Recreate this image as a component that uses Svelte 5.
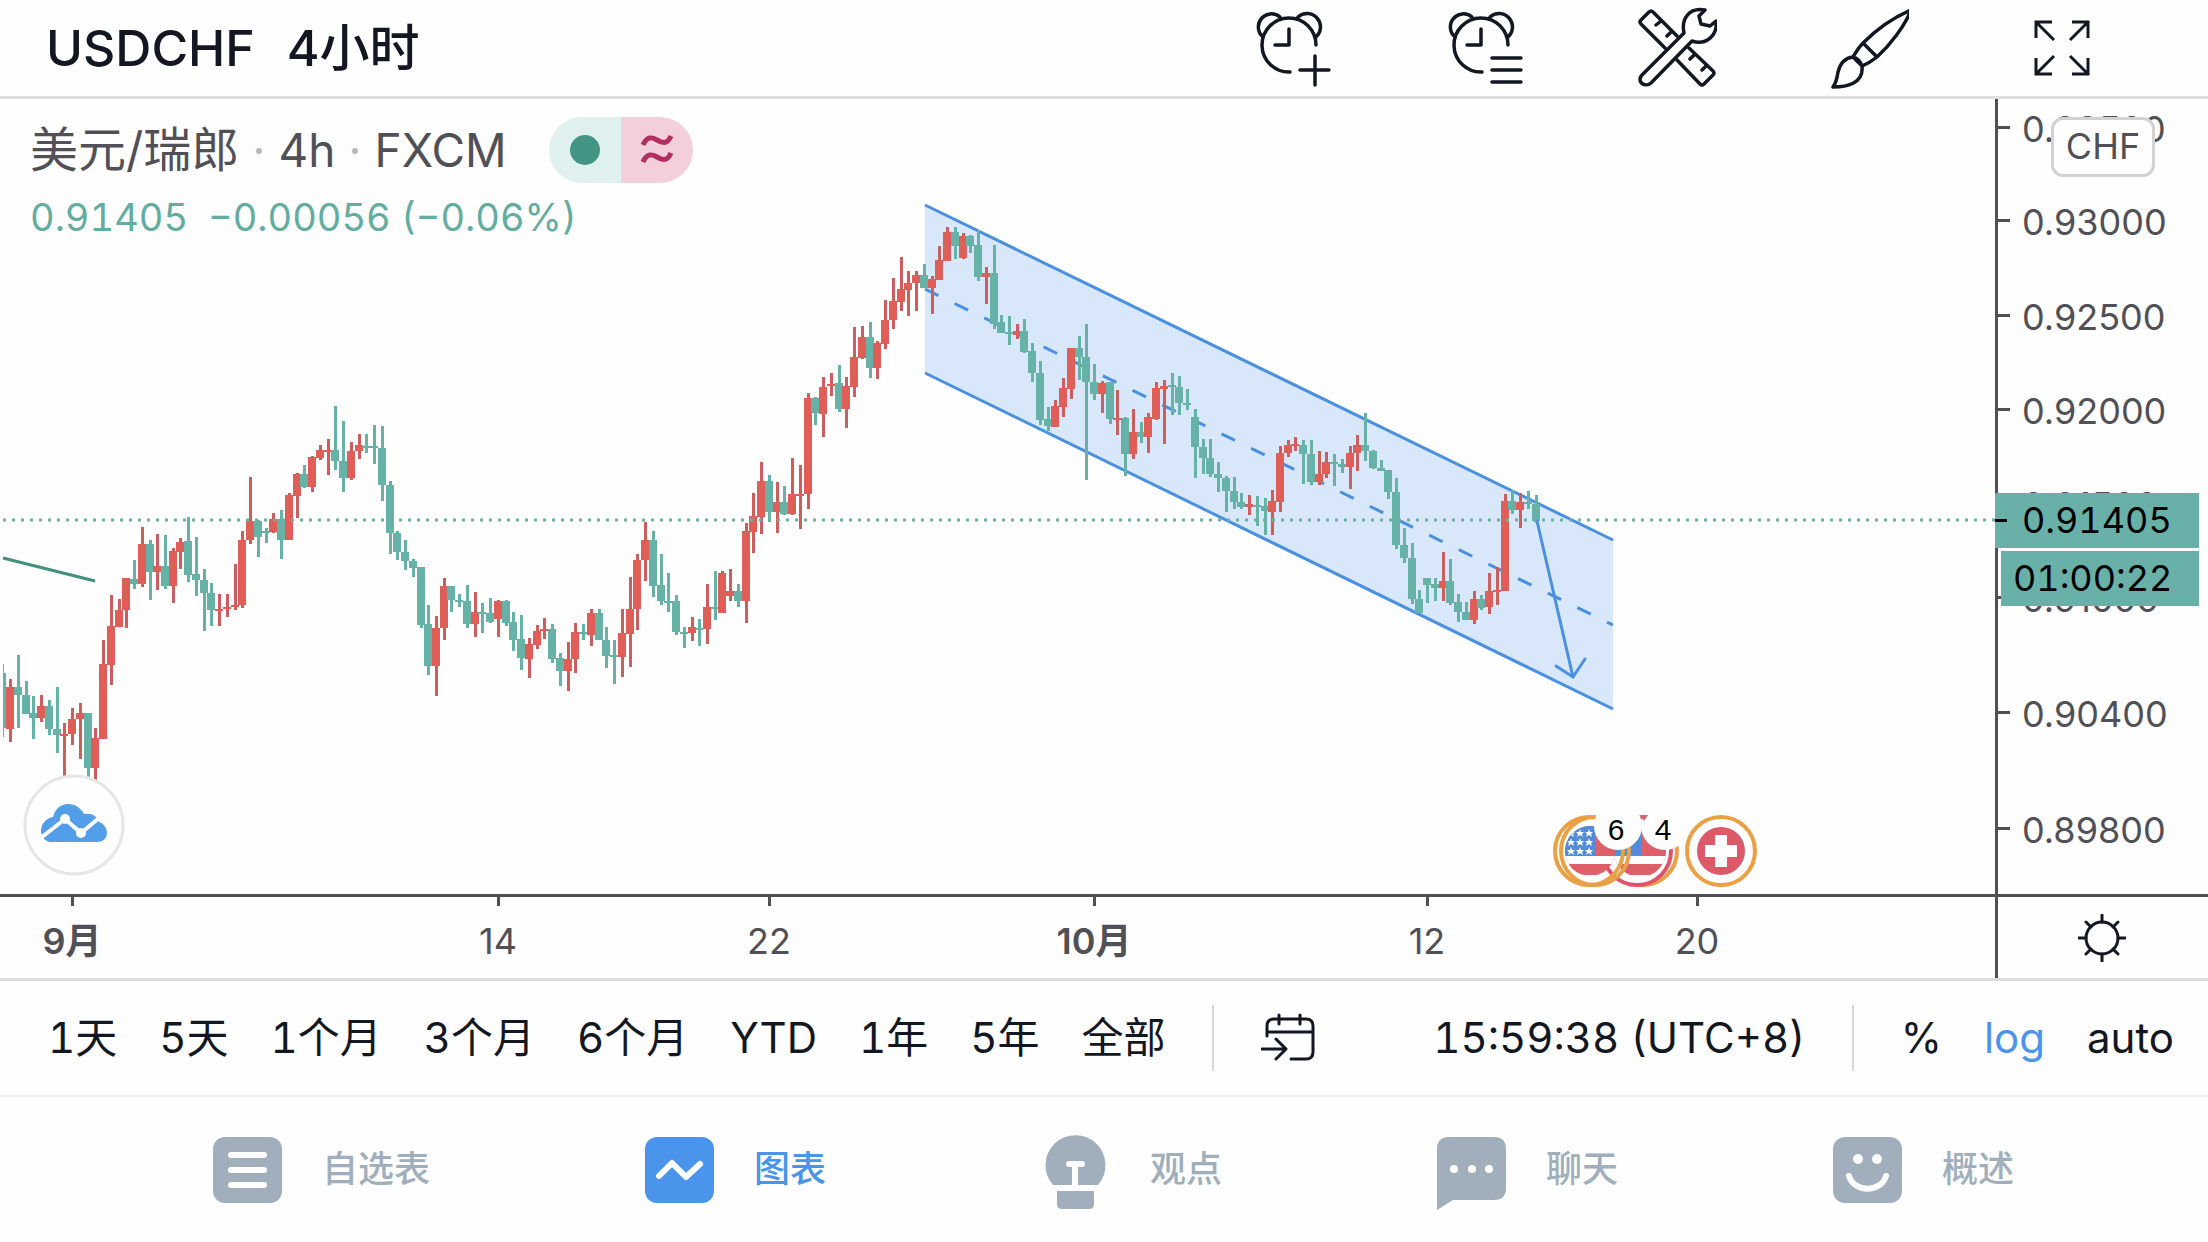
<script>
  // color, máximo, cuerpo arriba, cuerpo abajo, mínimo
  const datos = `
g 664 673 728 737|r 679 687 729 742|g 655 687 695 728|g 681 695 714 714|g 696 713 718 739|r 695 706 718 722
g 700 706 729 735|g 687 729 735 753|r 723 734 735 778|r 708 719 734 745|r 703 713 719 759|g 713 713 768 779
r 728 738 768 783|r 640 664 739 739|r 595 626 665 685|r 599 610 627 627|r 578 578 610 628|g 560 579 584 589
r 527 544 584 587|g 540 544 572 600|r 534 566 572 590|g 535 566 586 589|r 548 551 586 603|r 538 542 552 569
g 517 541 575 582|g 537 574 580 596|g 569 580 593 631|g 583 593 610 626|r 594 609 611 626|r 594 607 609 617
r 564 605 607 610|r 531 540 605 608|r 477 521 540 544|g 520 521 537 557|g 528 531 532 543|r 513 519 532 533
g 510 519 540 559|r 493 495 540 540|r 473 474 496 518|g 465 474 487 488|r 456 457 487 492|r 445 450 458 460
r 439 450 451 475|g 406 450 461 470|g 421 461 478 492|r 442 451 478 480|r 434 445 451 459|g 434 446 447 453
g 425 446 448 464|g 426 448 485 501|g 481 485 533 554|g 531 533 552 560|g 540 552 561 570|g 559 561 568 577
g 567 567 625 628|g 605 624 666 675|r 616 628 666 696|r 578 586 628 640|g 586 586 600 612|g 594 600 601 607
g 585 601 624 628|r 592 612 624 637|g 603 612 613 633|g 598 613 622 623|r 600 601 619 637|g 600 601 623 626
g 612 622 640 651|g 615 639 658 670|r 638 644 659 678|r 625 631 645 649|r 618 629 631 639|g 624 629 659 663
g 653 658 671 686|r 642 659 671 691|r 623 632 659 673|g 624 632 634 640|r 609 613 635 646|g 609 613 640 640
g 627 640 656 668|g 640 655 656 684|r 609 633 657 677|r 577 609 634 667|r 554 560 609 630|r 522 540 560 581
g 531 540 586 597|g 554 585 601 605|g 573 601 602 612|g 595 601 632 635|g 627 632 633 648|r 617 627 633 641
g 619 628 629 646|r 584 607 629 644|g 571 607 609 620|r 571 573 613 613|r 569 591 596 601|g 584 591 601 607
r 523 531 601 623|r 493 516 532 553|r 462 481 517 534|g 475 481 512 522|r 482 502 512 533|g 486 502 514 515
r 458 494 514 515|r 465 494 495 529|r 393 398 494 509|g 397 398 413 425|r 377 387 414 437|r 373 384 386 396
g 365 383 409 412|r 377 386 409 428|r 327 357 387 397|r 326 337 358 359|g 322 337 368 378|r 341 343 368 379
r 300 320 344 349|r 278 301 320 329|r 257 289 302 311|r 271 283 290 316|r 271 275 283 311|g 264 275 288 288
r 276 279 288 314|r 246 260 280 280|r 227 232 261 261|g 227 232 246 259|r 233 236 258 259|g 235 236 246 253
g 230 245 277 281|r 267 273 277 304|g 245 273 324 329|g 315 322 333 333|g 316 332 333 345|r 324 331 335 339
g 319 331 352 353|g 343 351 373 382|g 361 373 420 425|g 407 419 426 431|r 400 406 427 427|r 378 388 407 417
r 348 348 389 399|g 336 348 357 380|g 324 357 382 480|g 364 382 394 400|r 381 383 394 413|g 382 382 419 424
r 390 418 419 435|g 417 418 454 476|r 409 432 454 459|g 422 432 437 443|r 413 417 437 453|r 382 388 419 420
r 380 386 389 444|g 373 385 387 415|g 376 387 403 415|g 389 403 404 410|g 409 417 447 478|g 439 447 458 474
g 439 458 474 477|g 462 474 478 492|g 476 478 491 512|g 477 491 502 509|g 493 502 507 509|r 495 504 507 515
g 496 505 506 526|g 498 506 511 535|r 490 501 512 535|r 446 453 502 512|r 440 445 453 457|r 437 444 446 451
g 440 445 454 484|g 440 454 482 485|r 451 474 482 485|r 452 462 474 478|g 454 462 464 486|g 459 464 467 473
r 446 453 467 489|r 435 445 453 471|g 413 445 451 461|g 450 451 468 469|g 460 468 471 471|g 470 470 492 499
g 478 492 545 549|g 528 545 558 563|g 543 558 599 604|g 590 599 613 613|g 578 578 585 603|g 578 584 588 601
r 552 581 588 601|g 559 581 603 605|g 594 602 612 622|g 602 612 620 620|r 591 599 620 624|g 595 599 608 610
r 573 591 607 614|r 567 590 592 605|r 494 501 591 591|g 490 501 510 514|r 493 502 510 528|g 491 502 504 509
g 495 504 521 523`;

  const velas = datos.trim().split(/[|\n]/).map((fila, i) => {
    const [color, max, arriba, abajo, min] = fila.split(' ');
    return {
      x: Math.round(2.4 + i * 7.743),
      sube: color === 'r',
      max: +max,
      arriba: +arriba,
      abajo: +abajo,
      min: +min
    };
  });

  const precios = [
    { y: 127, texto: '0.93500' },
    { y: 220, texto: '0.93000' },
    { y: 315, texto: '0.92500' },
    { y: 409, texto: '0.92000' },
    { y: 503, texto: '0.91500' },
    { y: 597, texto: '0.91000' },
    { y: 712, texto: '0.90400' },
    { y: 828, texto: '0.89800' }
  ];

  const fechas = [
    { x: 72, texto: '9月', mes: true },
    { x: 498, texto: '14' },
    { x: 769, texto: '22' },
    { x: 1094, texto: '10月', mes: true },
    { x: 1427, texto: '12' },
    { x: 1697, texto: '20' }
  ];

  const rangos = ['1天', '5天', '1个月', '3个月', '6个月', 'YTD', '1年', '5年', '全部'];

  const estrellas = [
    [1571, 833], [1580, 833], [1589, 833],
    [1571, 842], [1580, 842], [1589, 842],
    [1571, 851], [1580, 851], [1589, 851]
  ];

  let activa = 'grafico';
  let escalaLog = true;
</script>

<header class="top-bar">
  <button class="symbol">USDCHF</button>
  <button class="symbol">4小时</button>
  <div class="tools">
    <button aria-label="添加警报">
      <svg width="80" height="88" viewBox="0 0 80 88">
        <path d="M63 41A27 27 0 1 0 37 68M10 33A13 13 0 1 1 27 13M45 13A13 13 0 1 1 63 33M36 25V41H22M62 52V81M47 66H76" />
      </svg>
    </button>
    <button aria-label="警报列表">
      <svg width="80" height="88" viewBox="0 0 80 88">
        <path d="M63 41A27 27 0 1 0 37 68M10 33A13 13 0 1 1 27 13M45 13A13 13 0 1 1 63 33M36 25V41H22M47 54H76M47 66H76M47 78H76" />
      </svg>
    </button>
    <button aria-label="工具">
      <svg width="80" height="88" viewBox="-1 0 80 88">
        <path d="M27 44L3 20Q1 18 3 16L11 8Q13 6 15 8L39 32M51 44L75 67Q77 69 75 71L66 80Q64 82 62 80L39 56M23 17L18 21M34 27L29 32M57 50L52 55M69 61L64 66" />
        <path d="M4 71L46 29C43 15 51 3 67 6L61 12L63 20L72 22L78 17C80 31 68 42 54 37L13 79C7 84 -2 78 4 71Z" />
      </svg>
    </button>
    <button aria-label="绘图">
      <svg width="80" height="88" viewBox="-3 0 80 88">
        <path d="M79 6C60 14 43 27 31 39C26 44 24 48 21 53L30 62C35 60 40 57 45 53C58 41 73 22 79 6ZM31 39L45 53M21 53C12 54 8 60 6 68C5 75 4 79 1 83C14 83 32 80 30 62C28 57 25 54 21 53Z" />
      </svg>
    </button>
    <button aria-label="全屏">
      <svg width="80" height="88" viewBox="0 0 80 88">
        <path class="square" d="M33 36L15 18M15 34V18H31M49 36L67 18M51 18H67V34M33 52L15 70M15 54V70H31M49 52L67 70M51 70H67V54" />
      </svg>
    </button>
  </div>
</header>

<main class="chart">
  <svg class="plot" viewBox="0 99 2208 879" role="img" aria-label="USDCHF">
    <polygon points="925,205 1613,540 1613,709 925,373" fill="#d8e7f9" />
    <g class="channel">
      <line x1="925" y1="205" x2="1613" y2="540" />
      <line x1="925" y1="373" x2="1613" y2="709" />
      <line x1="925" y1="289" x2="1613" y2="625" stroke-dasharray="15 18" />
    </g>
    <line x1="3" y1="558" x2="95" y2="581" stroke="#43907f" stroke-width="3" />

    {#each velas as vela}
      <rect class="wick" class:up={vela.sube} x={vela.x - 1} y={vela.max} width="3" height={vela.min - vela.max} />
      <rect class="body" class:up={vela.sube} x={vela.x - 4} y={vela.arriba} width="8" height={Math.max(2, vela.abajo - vela.arriba)} />
    {/each}
    <rect x="0" y="600" width="3" height="200" fill="#fefefe" />

    <line x1="3" y1="520" x2="1995" y2="520" stroke="#6fb0a3" stroke-width="3" stroke-dasharray="3 6" />
    <path class="arrow" d="M1537 521L1573 677M1556 666L1573 677L1585 659" />

    <!-- logo -->
    <circle cx="74" cy="825" r="49" fill="#fefefe" stroke="#e6e6e6" stroke-width="3" />
    <path d="M50 842C44 841 41 836 41 831C41 823 47 818 53 817C55 809 61 804 68 804C75 804 81 808 84 814Q95 812 99 822C104 824 107 828 107 833C107 838 103 842 97 842Z" fill="#529ee8" />
    <path d="M42 837L65 819L81 833L99 818" fill="none" stroke="#fefefe" stroke-width="4" />
    <circle cx="65" cy="819" r="5" fill="#fefefe" />
    <circle cx="81" cy="833" r="5" fill="#fefefe" />

    <!-- eventos económicos -->
    <g fill="none" stroke="#eba045" stroke-width="4">
      <circle cx="1643" cy="851" r="34" />
      <circle cx="1637" cy="851" r="34" stroke="#e0536b" fill="#fefefe" />
    </g>
    <clipPath id="flag-b"><circle cx="1640" cy="851" r="26" /></clipPath>
    <g clip-path="url(#flag-b)">
      <rect x="1612" y="825" width="56" height="50" fill="#dc5f69" />
      <rect x="1612" y="856" width="56" height="8" fill="#fefefe" />
      <rect x="1612" y="825" width="30" height="30" fill="#528bdc" />
    </g>
    <g fill="none" stroke="#eba045" stroke-width="4">
      <circle cx="1595" cy="851" r="34" />
      <circle cx="1589" cy="851" r="34" />
    </g>
    <clipPath id="flag-a"><circle cx="1590" cy="851" r="25" /></clipPath>
    <g clip-path="url(#flag-a)">
      <rect x="1564" y="825" width="56" height="50" fill="#dc5f69" />
      <rect x="1564" y="856" width="56" height="8" fill="#fefefe" />
      <rect x="1564" y="825" width="31" height="31" fill="#528bdc" />
      {#each estrellas as [x, y]}
        <path d="M{x} {y - 4}l1 3h3l-2 2 1 3-3-2-3 2 1-3-2-2h3z" fill="#fff" />
      {/each}
    </g>
    <circle cx="1618" cy="826" r="24" fill="#fefefe" />
    <circle cx="1665" cy="826" r="24" fill="#fefefe" />
    <path d="M1640 815h8l-4 6z" fill="#d4656f" />
    <text class="count" x="1616" y="840">6</text>
    <text class="count" x="1663" y="840">4</text>
    <circle cx="1721" cy="851" r="34" fill="#fefefe" stroke="#eba045" stroke-width="4" />
    <circle cx="1721" cy="851" r="24" fill="#dc5a67" />
    <path d="M1721 835v32M1705 851h32" stroke="#fff" stroke-width="12" />

    <!-- ejes -->
    <rect class="axis" x="1995" y="99" width="3" height="879" />
    <rect class="axis" x="0" y="894" width="2208" height="3" />
    {#each precios as precio}
      <rect class="axis" x="1998" y={precio.y - 1} width="12" height="3" />
      <text class="label" x="2022" y={precio.y + 15}>{precio.texto}</text>
    {/each}
    {#each fechas as fecha}
      <rect class="axis" x={fecha.x - 1} y="897" width="3" height="9" />
      <text class="label date" class:month={fecha.mes} x={fecha.x} y="954">{fecha.texto}</text>
    {/each}

    <rect x="2001" y="548" width="198" height="3" fill="#fefefe" />
    <rect x="1995" y="493" width="204" height="55" fill="#69b1a8" />
    <rect x="2001" y="551" width="198" height="55" fill="#69b1a8" />
    <rect x="1995" y="519" width="12" height="3" />
    <text class="label now" x="2022" y="533">0.91405</text>
    <text class="label now" x="2013" y="591">01:00:22</text>
  </svg>

  <div class="legend">
    <div class="title">
      <span><b>美元/瑞郎</b> <i>·</i> 4h <i>·</i> FXCM</span>
      <div class="pill">
        <span class="open"></span>
        <span class="approx">
          <svg width="34" height="38" viewBox="0 0 34 38">
            <path d="M3 14C7 5 12 6 17 9S27 14 31 5M3 31C7 22 12 23 17 26S27 31 31 22" />
          </svg>
        </span>
      </div>
    </div>
    <div class="values">
      <span>0.91405</span>
      <span>−0.00056 (−0.06%)</span>
    </div>
  </div>

  <button class="currency">CHF</button>
  <button class="settings" aria-label="设置">
    <svg width="48" height="48" viewBox="0 0 48 48">
      <circle cx="24" cy="24" r="16" />
      <path d="M24 1V8M24 40V47M1 24H8M40 24H47M8 8L13 13M35 35L40 40M8 40L13 35M35 13L40 8" />
    </svg>
  </button>
</main>

<div class="range-bar">
  <div class="ranges">
    {#each rangos as rango}
      <button>{rango}</button>
    {/each}
  </div>
  <span class="divider"></span>
  <button class="goto" aria-label="前往日期">
    <svg width="54" height="50" viewBox="0 0 54 50">
      <path d="M6 23V13Q6 6 13 6H45Q52 6 52 13V39Q52 46 45 46H30M6 19H52M18 2V11M39 2V11M1 36H24M15 26L25 36L15 46" />
    </svg>
  </button>
  <button class="clock">15:59:38 (UTC+8)</button>
  <span class="divider"></span>
  <div class="scales">
    <button>%</button>
    <button class:on={escalaLog} on:click={() => (escalaLog = !escalaLog)}>log</button>
    <button>auto</button>
  </div>
</div>

<nav class="tabs">
  <a href="#lista" class:active={activa === 'lista'} on:click={() => (activa = 'lista')}>
    <svg width="69" height="66" viewBox="0 0 69 66">
      <rect width="69" height="66" rx="12" />
      <path class="line" d="M18 18H51M18 33H51M18 48H51" />
    </svg>
    自选表
  </a>
  <a href="#grafico" class:active={activa === 'grafico'} on:click={() => (activa = 'grafico')}>
    <svg width="69" height="66" viewBox="0 0 69 66">
      <rect width="69" height="66" rx="12" />
      <path class="line" d="M14 39L27 26L41 40L55 27" />
    </svg>
    图表
  </a>
  <a href="#ideas" class:active={activa === 'ideas'} on:click={() => (activa = 'ideas')}>
    <svg width="69" height="66" viewBox="-4 0 69 66">
      <path d="M8 48A30 30 0 1 1 53 48ZM12 54H49V67Q49 72 44 72H17Q12 72 12 67Z" />
      <path class="line" d="M24 27H37M30 28V48" />
    </svg>
    观点
  </a>
  <a href="#chat" class:active={activa === 'chat'} on:click={() => (activa = 'chat')}>
    <svg width="69" height="66" viewBox="0 0 69 66">
      <path d="M12 0H57Q69 0 69 12V51Q69 63 57 63H16L0 73V12Q0 0 12 0Z" />
      <circle cx="17" cy="32" r="4" />
      <circle cx="35" cy="32" r="4" />
      <circle cx="52" cy="32" r="4" />
    </svg>
    聊天
  </a>
  <a href="#resumen" class:active={activa === 'resumen'} on:click={() => (activa = 'resumen')}>
    <svg width="69" height="66" viewBox="0 0 69 66">
      <rect width="69" height="66" rx="12" />
      <circle cx="25" cy="22" r="5" />
      <circle cx="44" cy="22" r="5" />
      <path class="line" d="M16 39C21 56 48 56 53 39" />
    </svg>
    概述
  </a>
</nav>

<style>
  :global(body) {
    margin: 0;
    background: #fefefe;
    color: #131722;
    font-family: Inter, "Noto Sans CJK SC", sans-serif;
    line-height: 1.2;
  }

  button {
    padding: 0;
    border: none;
    background: none;
    color: inherit;
    font: inherit;
    white-space: nowrap;
    cursor: pointer;
  }

  svg {
    display: block;
  }

  .top-bar {
    display: flex;
    align-items: center;
    gap: 32px;
    height: 96px;
    padding: 0 107px 0 46px;
    border-bottom: 3px solid #dedede;
  }

  .symbol {
    font-size: 50px;
    font-weight: 500;
  }

  .tools {
    display: flex;
    gap: 112px;
    margin-left: auto;
  }

  .tools path,
  .goto path,
  .settings path,
  .settings circle {
    fill: none;
    stroke: #131722;
    stroke-width: 3;
    stroke-linecap: round;
    stroke-linejoin: round;
  }

  .tools path {
    stroke-width: 3.5;
  }

  .tools path.square {
    stroke-width: 3;
    stroke-linecap: butt;
    stroke-linejoin: miter;
  }

  .chart {
    position: relative;
    border-bottom: 3px solid #dcdcdc;
  }

  .plot {
    width: 100%;
    height: auto;
  }

  .channel line,
  .arrow {
    fill: none;
    stroke: #4a90e0;
    stroke-width: 3;
  }

  .arrow {
    stroke-linecap: round;
  }

  .body,
  .wick {
    fill: #67b2a6;
  }

  .body.up {
    fill: #df5e58;
  }

  .wick.up {
    fill: #cc5f5e;
  }

  .axis {
    fill: #505054;
  }

  .label {
    font-size: 36px;
    fill: #505056;
  }

  .label.now {
    fill: #000;
    font-variant-numeric: tabular-nums;
  }

  .date {
    text-anchor: middle;
  }

  .month {
    font-weight: 600;
  }

  .count {
    font-family: "Liberation Sans", Arial, sans-serif;
    font-size: 30px;
    text-anchor: middle;
  }

  .legend {
    position: absolute;
    top: 18px;
    left: 30px;
  }

  .title {
    display: flex;
    align-items: center;
    gap: 42px;
    height: 66px;
    font-size: 46px;
    color: #505056;
  }

  .title b {
    font-size: 48px;
    font-weight: 400;
  }

  .title i {
    color: #b9b9bd;
    font-style: normal;
  }

  .pill {
    display: flex;
    border-radius: 33px;
    overflow: hidden;
  }

  .pill > span {
    display: flex;
    align-items: center;
    justify-content: center;
    width: 72px;
    height: 66px;
  }

  .open {
    background: #e0f0ee;
  }

  .open::before {
    content: "";
    width: 30px;
    height: 30px;
    border-radius: 50%;
    background: #429485;
  }

  .approx {
    background: #f3cfdb;
  }

  .approx path {
    fill: none;
    stroke: #b02e60;
    stroke-width: 5;
  }

  .values {
    display: flex;
    gap: 20px;
    margin-top: 10px;
    font-size: 38px;
    font-variant-numeric: tabular-nums;
    line-height: 48px;
    color: #62aca0;
  }

  .currency {
    position: absolute;
    top: 18px;
    right: 53px;
    width: 104px;
    height: 60px;
    border: 3px solid #d2d2d2;
    border-radius: 12px;
    background: #fefefe;
    color: #505056;
    font-size: 36px;
  }

  .settings {
    position: absolute;
    right: 82px;
    bottom: 16px;
  }

  .range-bar {
    display: flex;
    align-items: center;
    justify-content: space-between;
    height: 114px;
    padding: 0 34px 0 48px;
    border-bottom: 2px solid #efefef;
    font-size: 42px;
    font-variant-numeric: tabular-nums;
  }

  .ranges,
  .scales {
    display: flex;
    gap: 42px;
  }

  .divider {
    width: 2px;
    height: 66px;
    background: #d8d8dc;
  }

  .clock {
    margin-left: 72px;
  }

  .on {
    color: #4a94ec;
  }

  .tabs {
    display: flex;
    align-items: center;
    justify-content: space-between;
    height: 145px;
    padding: 0 194px 0 213px;
  }

  .tabs a {
    display: flex;
    align-items: center;
    gap: 40px;
    color: #a0afbb;
    font-size: 36px;
    font-weight: 500;
    text-decoration: none;
  }

  .tabs svg {
    overflow: visible;
    fill: currentColor;
  }

  .tabs .line {
    fill: none;
    stroke: #fff;
    stroke-width: 6;
    stroke-linecap: round;
    stroke-linejoin: round;
  }

  .tabs circle {
    fill: #fff;
  }

  .tabs a.active {
    color: #4a94ec;
  }
</style>
